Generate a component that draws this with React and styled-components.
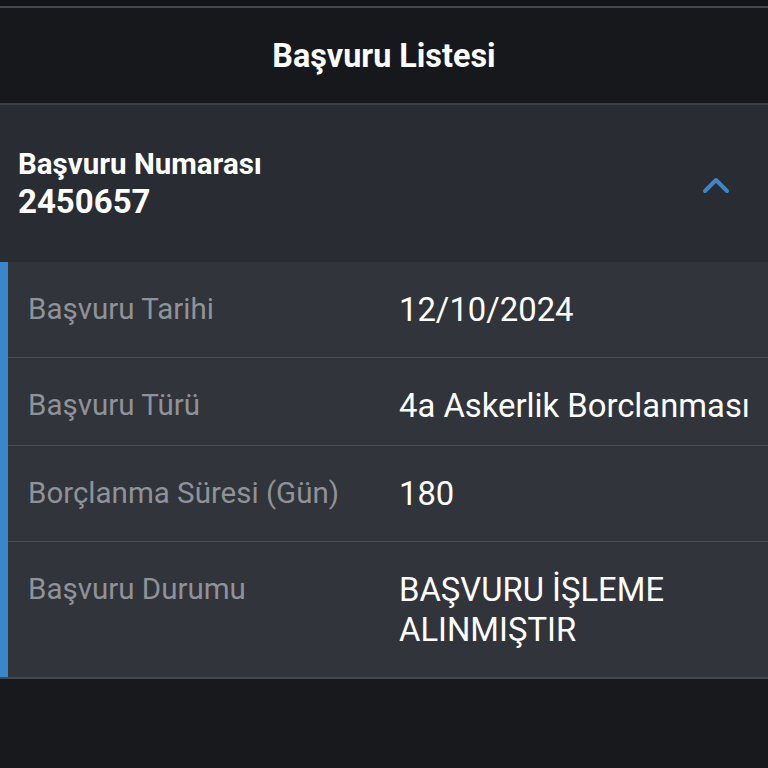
import React from "react";
import styled, { createGlobalStyle } from "styled-components";

const Global = createGlobalStyle`
  html, body { margin: 0; padding: 0; background: #17191d; }
  body { font-family: Roboto, "Noto Sans", sans-serif; }
`;

const Page = styled.div`
  width: 768px;
  height: 768px;
  background: #17191d;
  display: flex;
  flex-direction: column;
  overflow: hidden;
`;

const TopStrip = styled.div`
  height: 6px;
  background: #121418;
  border-bottom: 2px solid #45484e;
`;

const TitleBar = styled.header`
  height: 95px;
  display: flex;
  align-items: center;
  justify-content: center;
  background: #16181c;
  border-bottom: 2px solid #3c3f45;
`;

const Title = styled.h1`
  margin: 0;
  font-size: 33px;
  font-weight: 700;
  color: #ffffff;
  transform: scaleX(0.98);
`;

const AccordionHeader = styled.div`
  height: 157px;
  background: #292c33;
  display: flex;
  align-items: center;
  justify-content: space-between;
  padding: 0 38px 0 18px;
  box-sizing: border-box;
`;

const HeaderText = styled.div`
  display: flex;
  flex-direction: column;
  color: #ffffff;
  font-weight: 700;
  margin-top: -2px;
`;

const HeaderLabel = styled.span`
  font-size: 29.5px;
  line-height: 37px;
`;

const HeaderNumber = styled.span`
  font-size: 33px;
  line-height: 37px;
`;

const Chevron = styled.svg`
  width: 28px;
  height: 18px;
  margin-top: 2px;
`;

const Body = styled.div`
  display: flex;
  background: #31343b;
  border-bottom: 2px solid #44474e;
`;

const Accent = styled.div`
  width: 8px;
  background: #3a86c8;
  flex-shrink: 0;
`;

const Rows = styled.div`
  flex: 1;
  display: flex;
  flex-direction: column;
`;

const Row = styled.div`
  display: grid;
  grid-template-columns: 371px 1fr;
  padding: 26px 0 ${(p) => p.$pb}px 20px;
  border-top: ${(p) => (p.$first ? "none" : "1px solid #4a4d54")};
`;

const Label = styled.div`
  font-size: 29.5px;
  line-height: 38px;
  color: #8f9298;
  margin-top: 2px;
`;

const Value = styled.div`
  font-size: 32.8px;
  line-height: 40px;
  color: #ffffff;
  white-space: pre-line;
  margin-top: 2px;
  margin-bottom: -2px;
`;

const Filler = styled.div`
  flex: 1;
  background: #17191d;
`;

const rows = [
  { label: "Başvuru Tarihi", value: "12/10/2024", pb: 29 },
  { label: "Başvuru Türü", value: "4a Askerlik Borclanması", pb: 21 },
  { label: "Borçlanma Süresi (Gün)", value: "180", pb: 29 },
  { label: "Başvuru Durumu", value: "BAŞVURU İŞLEME\nALINMIŞTIR", pb: 29 },
];

export default function App() {
  return (
    <Page>
      <Global />
      <TopStrip />
      <TitleBar>
        <Title>Başvuru Listesi</Title>
      </TitleBar>
      <AccordionHeader>
        <HeaderText>
          <HeaderLabel>Başvuru Numarası</HeaderLabel>
          <HeaderNumber>2450657</HeaderNumber>
        </HeaderText>
        <Chevron viewBox="0 0 28 18" fill="none">
          <path
            d="M3 15 L14 4 L25 15"
            stroke="#3f86c6"
            strokeWidth="4"
            strokeLinecap="round"
            strokeLinejoin="round"
          />
        </Chevron>
      </AccordionHeader>
      <Body>
        <Accent />
        <Rows>
          {rows.map((r, i) => (
            <Row key={r.label} $first={i === 0} $pb={r.pb}>
              <Label>{r.label}</Label>
              <Value>{r.value}</Value>
            </Row>
          ))}
        </Rows>
      </Body>
      <Filler />
    </Page>
  );
}
